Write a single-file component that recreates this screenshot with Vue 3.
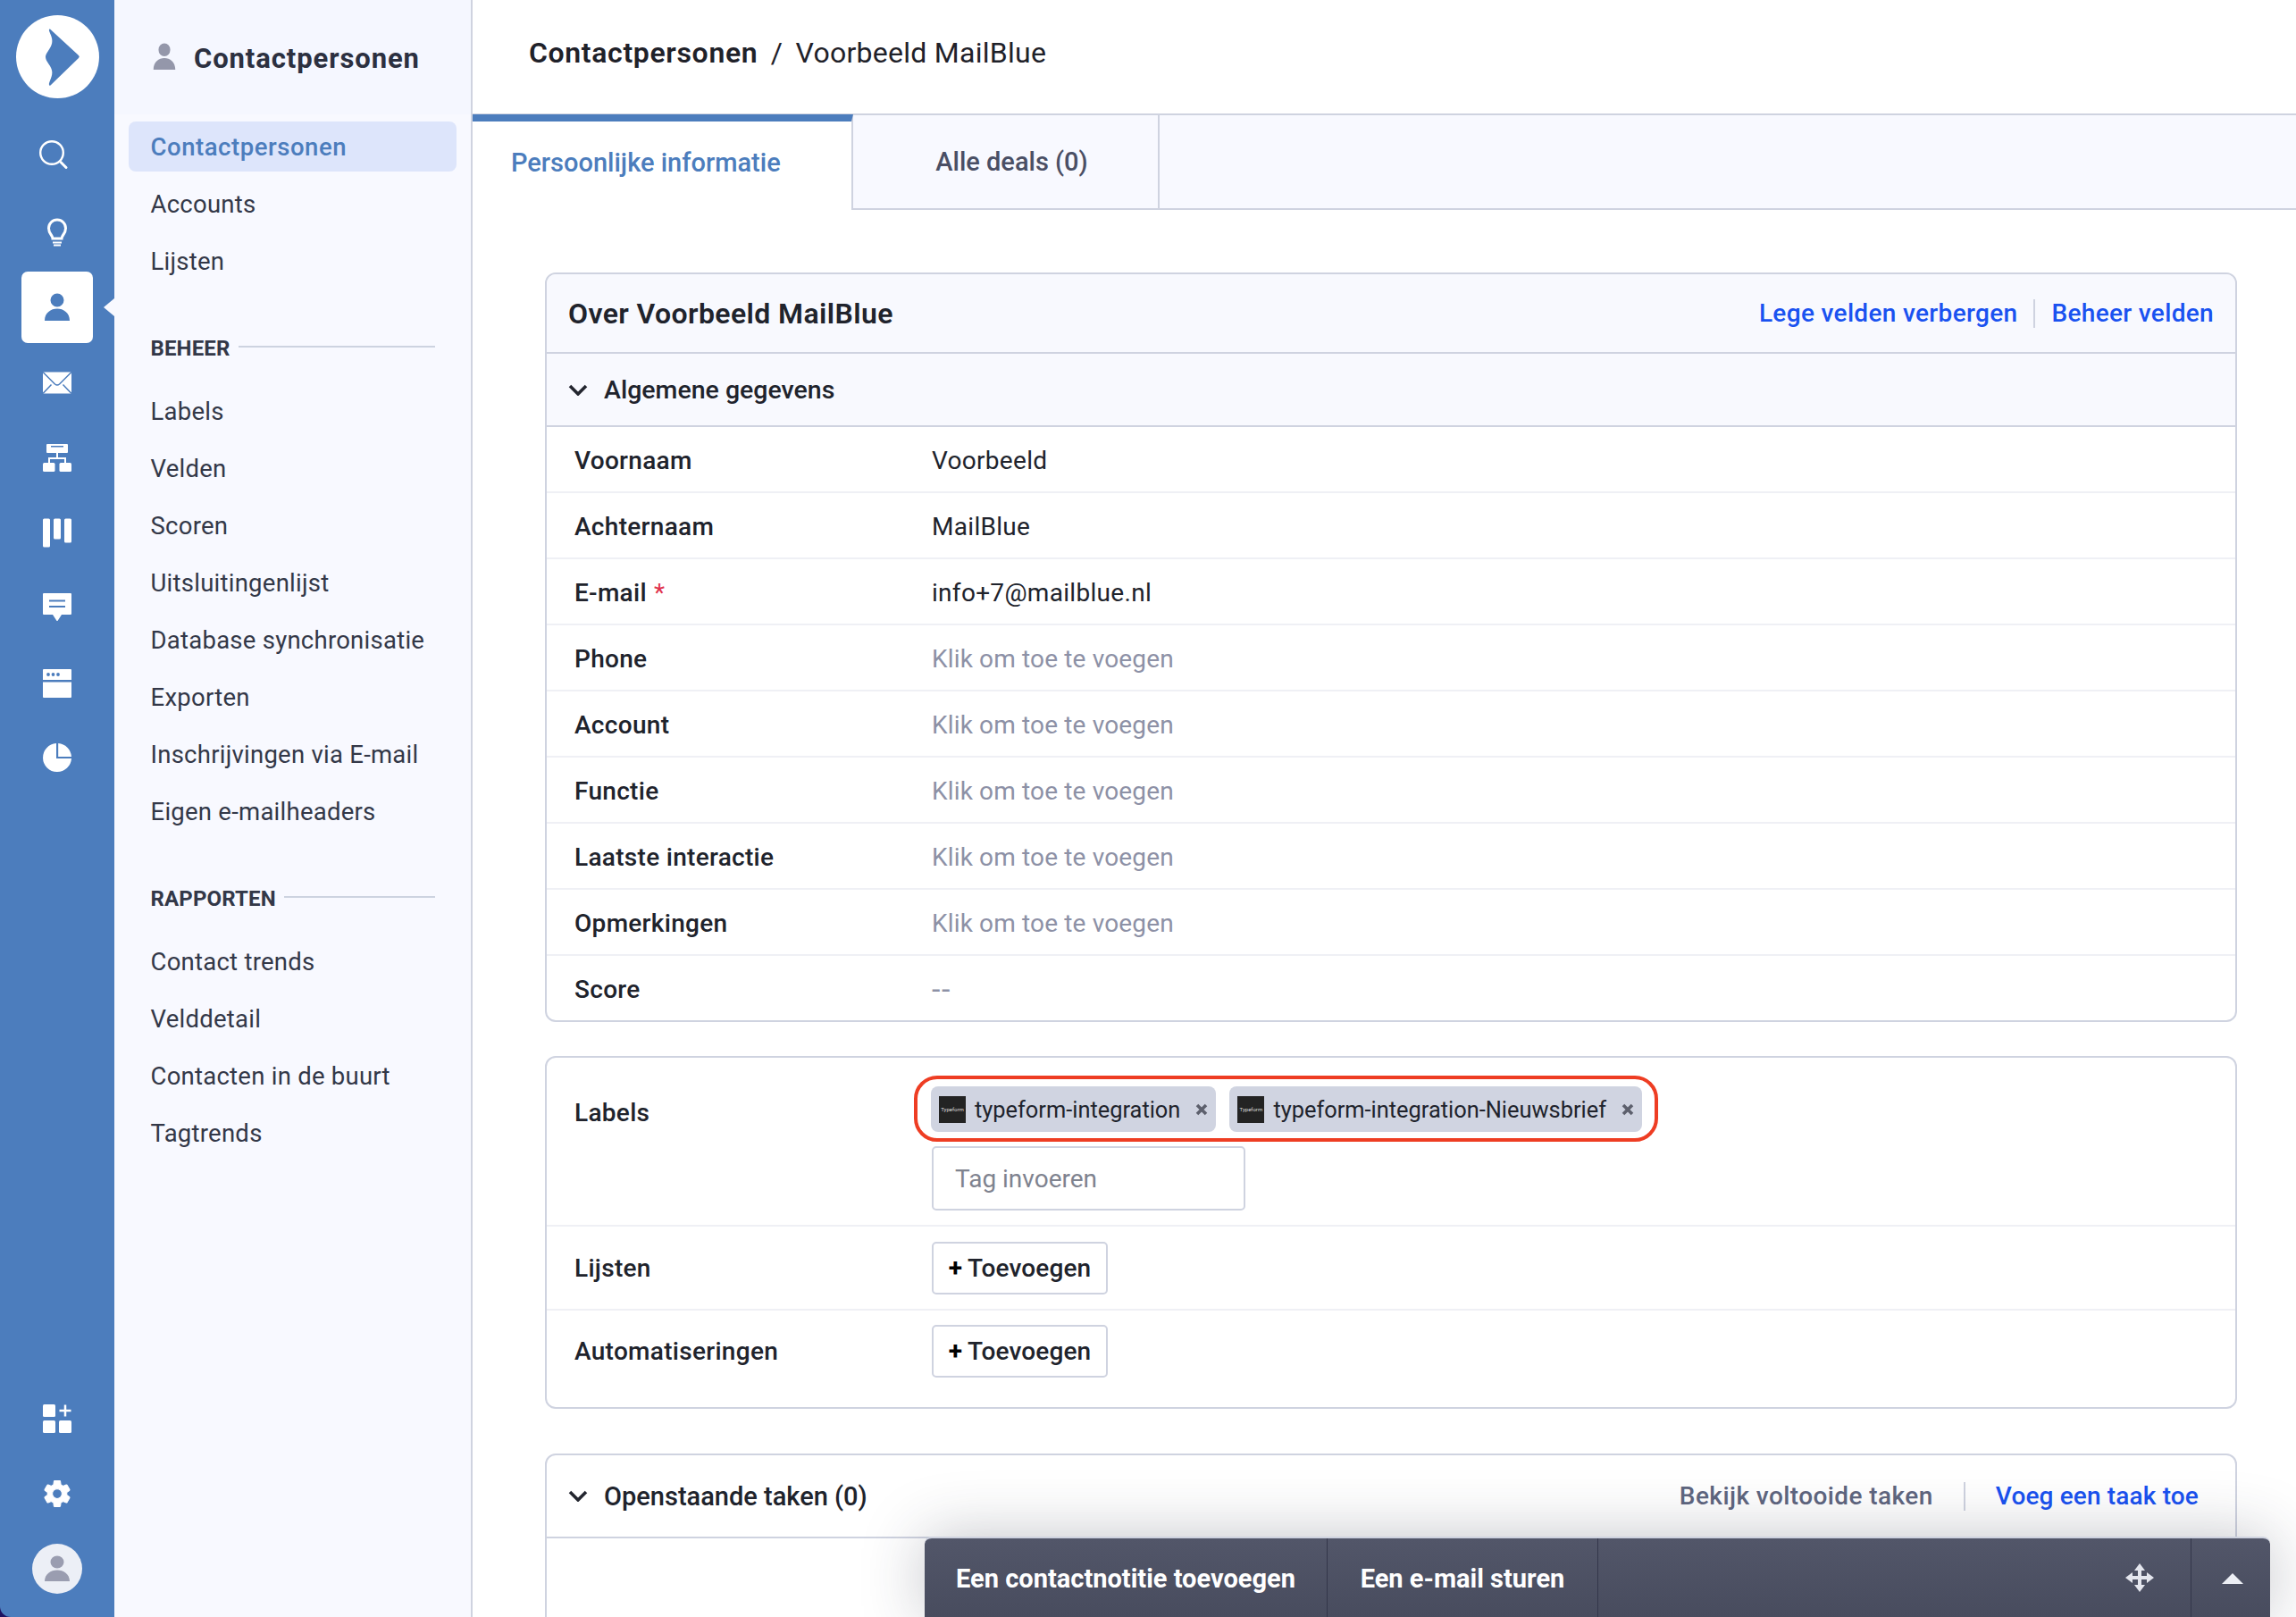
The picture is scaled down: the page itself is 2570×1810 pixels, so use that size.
<script setup>
const personPath = 'M16 .5a7.5 7.5 0 1 1 0 15 7.5 7.5 0 0 1 0-15zM2 31C2 22 9 17.5 16 17.5S30 22 30 31H2z'
const navTop = ['Contactpersonen', 'Accounts', 'Lijsten']
const beheer = ['Labels', 'Velden', 'Scoren', 'Uitsluitingenlijst', 'Database synchronisatie', 'Exporten', 'Inschrijvingen via E-mail', 'Eigen e-mailheaders']
const rapporten = ['Contact trends', 'Velddetail', 'Contacten in de buurt', 'Tagtrends']
const rows = [
  { label: 'Voornaam', value: 'Voorbeeld' },
  { label: 'Achternaam', value: 'MailBlue' },
  { label: 'E-mail', value: 'info+7@mailblue.nl', required: true },
  { label: 'Phone', placeholder: 'Klik om toe te voegen' },
  { label: 'Account', placeholder: 'Klik om toe te voegen' },
  { label: 'Functie', placeholder: 'Klik om toe te voegen' },
  { label: 'Laatste interactie', placeholder: 'Klik om toe te voegen' },
  { label: 'Opmerkingen', placeholder: 'Klik om toe te voegen' },
  { label: 'Score', placeholder: '--' }
]
const tags = ['typeform-integration', 'typeform-integration-Nieuwsbrief']
</script>

<template>
  <div class="app">
    <aside class="rail">
      <div class="logo">
        <svg width="93" height="93" viewBox="0 0 93 93"><circle cx="46.5" cy="46.5" r="46.5" fill="#fff" /><path d="M38 15.5 70 45q1.6 1.5 0 3L38.5 78.5q-2 1-1.6-2C38.500 71 42 66 39.500 60 37.500 55 33 51 33 46.800S37.500 39 39.500 33.500C42 27 38.500 22 37 17.500q-.5-2.500 1-2z" fill="#4c7dbd" /></svg>
      </div>
      <nav class="rail-nav">
        <div class="slot">
          <svg class="ico" viewBox="0 0 32 32" fill="none" stroke="#fff" stroke-width="2.4" stroke-linecap="round"><circle cx="10" cy="14" r="12.800" /><path d="M20 24.500l6 6" stroke-width="3" /></svg>
        </div>
        <div class="slot">
          <svg class="ico" viewBox="0 0 32 32" fill="none" stroke="#fff" stroke-width="3"><path d="M11 25c0-4-4.500-5-4.500-11.500a9.500 9.500 0 0 1 19 0C25.500 20 21 21 21 25z" /><path d="M11 29.500h10M12 32.500h8" stroke-width="2.200" /></svg>
        </div>
        <div class="slot slot-active">
          <div class="active-box">
            <svg class="ico" viewBox="0 0 32 32"><path :d="personPath" fill="#4c7dbd" /></svg>
          </div>
        </div>
        <div class="slot">
          <svg class="ico" viewBox="0 0 32 32"><rect y="5.500" width="32" height="24" fill="#fff" /><path d="M0 5.500l13.500 13.500q2.500 2 5 0L32 5.500M0 29.500l9.500-10M32 29.500l-9.500-10" fill="none" stroke="#4c7dbd" stroke-width="1.500" /></svg>
        </div>
        <div class="slot">
          <svg class="ico" viewBox="0 0 32 32" fill="#fff"><rect x="4" y="2" width="24" height="10" rx="1" /><rect x="9" y="4" width="14" height="1.500" fill="#4c7dbd" /><rect x="15" y="12" width="2" height="6" /><rect x="6" y="17" width="20" height="2" /><rect x="6" y="17" width="2" height="6" /><rect x="24" y="17" width="2" height="6" /><rect y="23" width="13.500" height="10" rx="1.500" /><rect x="18.500" y="23" width="13.500" height="10" rx="1.500" /></svg>
        </div>
        <div class="slot">
          <svg class="ico" viewBox="0 0 32 32" fill="#fff"><rect y=".5" width="8" height="32" rx="1.500" /><rect x="12" y=".5" width="8" height="23" rx="1.500" /><rect x="24" y=".5" width="8" height="27" rx="1.500" /></svg>
        </div>
        <div class="slot">
          <svg class="ico" viewBox="0 0 32 32" fill="#fff"><path d="M1 0h30a1 1 0 0 1 1 1v22a1 1 0 0 1-1 1H21l-4.200 6.500q-.8 1-1.600 0L11 24H1a1 1 0 0 1-1-1V1a1 1 0 0 1 1-1z" /><path d="M7 8.500h18M7 15h18" stroke="#4c7dbd" stroke-width="1.800" /></svg>
        </div>
        <div class="slot">
          <svg class="ico" viewBox="0 0 32 32" fill="#fff"><path d="M1 0h30a1 1 0 0 1 1 1v11H0V1a1 1 0 0 1 1-1z" /><path d="M0 14.500h32V31a1 1 0 0 1-1 1H1a1 1 0 0 1-1-1z" /><circle cx="6" cy="6" r="1.900" fill="#4c7dbd" /><circle cx="11.500" cy="6" r="1.900" fill="#4c7dbd" /><circle cx="17" cy="6" r="1.900" fill="#4c7dbd" /></svg>
        </div>
        <div class="slot">
          <svg class="ico" viewBox="0 0 32 32" fill="#fff"><path d="M15 -.9A16 16 0 1 0 32 16H15z" /><path d="M17.200 -.9A16 16 0 0 1 32 13.900H17.200z" /></svg>
        </div>
      </nav>
      <div class="rail-bottom">
        <div class="slot-b">
          <svg class="ico" viewBox="0 0 32 32" fill="#fff"><rect width="14" height="14" rx="1.500" /><rect y="18" width="14" height="14" rx="1.500" /><rect x="18" y="18" width="14" height="14" rx="1.500" /><path d="M18.500 7h13M25 .5v13" stroke="#fff" stroke-width="2.500" /></svg>
        </div>
        <div class="slot-b">
          <svg class="ico ico-gear" viewBox="0 0 24 24" fill="#fff" stroke="#fff" stroke-width=".7"><path d="M19.140 12.940c.04-.3.06-.61.06-.94 0-.32-.02-.64-.07-.94l2.030-1.580a.49.49 0 0 0 .12-.61l-1.920-3.320a.488.488 0 0 0-.59-.22l-2.390.96c-.5-.38-1.030-.7-1.620-.94l-.36-2.540a.484.484 0 0 0-.48-.41h-3.840c-.24 0-.43.17-.47.41l-.36 2.540c-.59.24-1.130.57-1.620.94l-2.390-.96c-.22-.08-.47 0-.59.22L2.740 8.870c-.12.21-.08.47.12.61l2.030 1.580c-.05.3-.09.63-.09.94s.02.64.07.94l-2.030 1.580a.49.49 0 0 0-.12.61l1.920 3.320c.12.22.37.29.59.22l2.390-.96c.5.38 1.030.7 1.620.94l.36 2.540c.05.24.24.41.48.41h3.840c.24 0 .44-.17.47-.41l.36-2.540c.59-.24 1.130-.56 1.620-.94l2.390.96c.22.08.47 0 .59-.22l1.920-3.320c.12-.22.07-.47-.12-.61l-2.010-1.580zM12 15.600c-1.980 0-3.600-1.620-3.600-3.600s1.620-3.600 3.600-3.600 3.600 1.620 3.600 3.600-1.620 3.600-3.600 3.600z" fill-rule="evenodd" /></svg>
        </div>
        <div class="slot-b">
          <div class="avatar">
            <svg width="32" height="30" viewBox="0 0 32 32" preserveAspectRatio="none"><path :d="personPath" fill="#9a9db0" /></svg>
          </div>
        </div>
      </div>
    </aside>

    <aside class="subnav">
      <div class="sub-head">
        <svg class="sub-ico" width="28" height="31" viewBox="0 0 32 32" preserveAspectRatio="none"><path :d="personPath" fill="#9497aa" /></svg>
        <span class="sub-title">Contactpersonen</span>
      </div>
      <div class="sub-body">
        <a v-for="(item, i) in navTop" :key="item" class="sub-item" :class="{ on: i === 0 }">{{ item }}</a>
        <div class="sub-group group-1"><span>BEHEER</span><i></i></div>
        <a v-for="item in beheer" :key="item" class="sub-item">{{ item }}</a>
        <div class="sub-group group-2"><span>RAPPORTEN</span><i></i></div>
        <a v-for="item in rapporten" :key="item" class="sub-item">{{ item }}</a>
      </div>
    </aside>

    <main class="main">
      <header class="crumb"><b>Contactpersonen</b><span class="sep">/</span><span class="crumb-cur">Voorbeeld MailBlue</span></header>
      <div class="tabs">
        <div class="tab tab-on">Persoonlijke informatie</div>
        <div class="tab tab-off">Alle deals (0)</div>
        <div class="tab-rest"></div>
      </div>
      <div class="content">
        <section class="card">
          <div class="card-head">
            <h2>Over Voorbeeld MailBlue</h2>
            <div class="links"><a>Lege velden verbergen</a><i class="vr"></i><a>Beheer velden</a></div>
          </div>
          <div class="sec-head">
            <svg class="chev" width="22" height="13" viewBox="0 0 22 13"><path d="M2 2l9 9 9-9" fill="none" stroke="#23262f" stroke-width="3.600" /></svg>
            <span>Algemene gegevens</span>
          </div>
          <div v-for="r in rows" :key="r.label" class="row">
            <div class="lbl">{{ r.label }}<em v-if="r.required">*</em></div>
            <div v-if="r.value" class="val">{{ r.value }}</div>
            <div v-else class="val ph" :class="{ dash: r.placeholder === '--' }">{{ r.placeholder }}</div>
          </div>
        </section>

        <section class="card card-2">
          <div class="row2 row-labels">
            <div class="lbl lbl-top">Labels</div>
            <div class="tagcol">
              <div class="chips">
                <div class="mark"></div>
                <div v-for="t in tags" :key="t" class="chip">
                  <span class="thumb">Typeform</span>
                  <span class="chip-t">{{ t }}</span>
                  <svg class="chip-x" width="14" height="14" viewBox="0 0 14 14"><path d="M2 2l10 10M12 2L2 12" stroke="#5d606d" stroke-width="3.600" /></svg>
                </div>
              </div>
              <div class="taginput">Tag invoeren</div>
            </div>
          </div>
          <div class="row2">
            <div class="lbl">Lijsten</div>
            <div class="btn"><b>+</b> Toevoegen</div>
          </div>
          <div class="row2 row-last">
            <div class="lbl">Automatiseringen</div>
            <div class="btn"><b>+</b> Toevoegen</div>
          </div>
        </section>

        <section class="card card-3">
          <div class="task-head">
            <svg class="chev" width="22" height="13" viewBox="0 0 22 13"><path d="M2 2l9 9 9-9" fill="none" stroke="#23262f" stroke-width="3.600" /></svg>
            <span class="task-t">Openstaande taken (0)</span>
            <a class="muted">Bekijk voltooide taken</a>
            <i class="vr vr-2"></i>
            <a class="blue">Voeg een taak toe</a>
          </div>
          <div class="task-body"></div>
        </section>
      </div>
    </main>

    <div class="dock">
      <div class="dock-cell cell-1">Een contactnotitie toevoegen</div>
      <div class="dock-cell cell-2">Een e-mail sturen</div>
      <div class="dock-fill">
        <svg width="32" height="32" viewBox="0 0 32 32" fill="#e4e6ee"><path d="M16 0l6 8h-4v6h6v-4l8 6-8 6v-4h-6v6h4l-6 8-6-8h4v-6H8v4l-8-6 8-6v4h6V8h-4z" /></svg>
      </div>
      <div class="dock-cell cell-up"><svg width="24" height="12" viewBox="0 0 24 12"><path d="M12 0l12 12H0z" fill="#eceef4" /></svg></div>
    </div>
  </div>
</template>

<style scoped>
.app {
  --ff: Roboto, "Noto Sans", sans-serif;
  position: relative;
  display: flex;
  width: 2570px;
  height: 1810px;
  overflow: hidden;
  background: #1e1160;
  font-family: var(--ff);
  font-size: 27px;
  color: #20232c;
}
.rail {
  display: flex;
  flex-direction: column;
  flex: 0 0 128px;
  background: #4c7dbd;
  border-bottom-left-radius: 12px;
}
.logo { display: flex; justify-content: center; padding-top: 17px; height: 93px; }
.rail-nav { display: flex; flex-direction: column; margin-top: 21px; }
.slot, .slot-b { display: flex; align-items: center; justify-content: center; height: 84.5px; }
.slot-active { position: relative; margin-top: 2px; margin-bottom: -2px; }
.slot-active::after {
  content: "";
  position: absolute;
  right: 0;
  top: 32px;
  border-style: solid;
  border-width: 10.5px 12px 10.5px 0;
  border-color: transparent #f8f9ff transparent transparent;
}
.active-box {
  display: flex;
  align-items: center;
  justify-content: center;
  width: 80px;
  height: 80px;
  background: #fff;
  border-radius: 7px;
}
.ico { width: 32px; height: 32px; overflow: visible; display: block; }
.ico-gear { width: 36px; height: 36px; }
.rail-bottom { margin-top: auto; padding-bottom: 12px; }
.slot-b { height: 84px; }
.avatar {
  display: flex;
  align-items: center;
  justify-content: center;
  width: 56px;
  height: 56px;
  border-radius: 50%;
  background: #eceff6;
}
.subnav {
  flex: 0 0 401px;
  box-sizing: border-box;
  background: #f8f9ff;
  border-right: 2px solid #cfd3e0;
}
.sub-head { display: flex; align-items: center; height: 128px; padding: 0 0 0 42px; box-sizing: border-box; background: #f5f7ff; }
.sub-ico { margin-right: 19px; margin-top: -1px; }
.sub-title { font-size: 31px; font-weight: 700; color: #2c3040; letter-spacing: .9px; margin-top: 2px; }
.sub-body { display: flex; flex-direction: column; padding: 8px 16px 0; }
.sub-item {
  display: flex;
  align-items: center;
  height: 64px;
  padding-left: 24.500px;
  color: #333848;
  font-size: 27.500px;
  letter-spacing: .25px;
}
.sub-item.on { height: 56px; margin-bottom: 4px; margin-top: 0; background: #dde5fb; color: #4c7dbd; border-radius: 8px; font-weight: 500; letter-spacing: .55px; }
.sub-group { display: flex; align-items: center; padding: 0 24px 0 24.500px; height: 40px; font-size: 24px; font-weight: 700; color: #333848; letter-spacing: .15px; }
.sub-group i { flex: 1; height: 2px; background: #cdd3e0; margin-left: 9px; margin-top: -4px; }
.group-1 { margin-top: 46px; margin-bottom: 18px; }
.group-2 { margin-top: 46px; margin-bottom: 18px; }
.main { flex: 1; min-width: 0; background: #fff; display: flex; flex-direction: column; }
.crumb {
  flex: none;
  display: flex;
  align-items: center;
  height: 127px;
  box-sizing: border-box;
  padding: 0 0 9px 63px;
  font-size: 32px;
  color: #1f2129;
}
.crumb b { font-weight: 600; letter-spacing: .65px; }
.crumb-cur { letter-spacing: .27px; }
.sep { margin: 0 14.500px; }
.tabs { flex: none; display: flex; height: 108px; border-top: 2px solid #cfd3e0; box-sizing: border-box; }
.tab { display: flex; align-items: center; font-size: 29px; font-weight: 500; box-sizing: border-box; }
.tab-on {
  width: 426px;
  padding: 0 0 8px 43px;
  margin-top: -1px;
  height: 107px;
  border-top: 8px solid #4c7dbd;
  border-right: 2px solid #cfd3e0;
  color: #4c7dbd;
  background: #fff;
}
.tab-off {
  width: 343px;
  justify-content: center;
  padding-left: 14px;
  background: #f8f9ff;
  border-right: 2px solid #cfd3e0;
  border-bottom: 2px solid #cfd3e0;
  color: #4a4f65;
}
.tab-rest { flex: 1; background: #f8f9ff; border-bottom: 2px solid #cfd3e0; }
.content { flex: none; padding: 70px 66px 0 81px; }
.card { border: 2px solid #cfd3e0; border-radius: 12px; overflow: hidden; box-sizing: border-box; background: #fff; }
.card-head {
  display: flex;
  align-items: center;
  justify-content: space-between;
  height: 87px;
  padding: 0 24px 0 24px;
  background: #f8f9fe;
  border-bottom: 2px solid #cfd3e0;
  box-sizing: content-box;
}
.card-head h2 { margin: 0; font-size: 32px; font-weight: 600; color: #20232c; letter-spacing: .4px; }
.links { display: flex; align-items: center; font-weight: 500; font-size: 28px; color: #1a52f0; letter-spacing: .33px; }
.vr { display: block; width: 2px; height: 32px; background: #cfd3e0; margin: 0 18px; }
.sec-head {
  display: flex;
  align-items: center;
  height: 82px;
  box-sizing: border-box;
  padding-left: 24px;
  background: #f8f9fe;
  border-bottom: 2px solid #cfd3e0;
  font-size: 28.500px;
  font-weight: 500;
}
.chev { margin-right: 18px; flex: none; }
.row {
  display: flex;
  align-items: center;
  height: 74px;
  box-sizing: border-box;
  padding: 2px 0 0 31px;
  border-bottom: 2px solid #eff0f5;
  font-size: 28px;
}
.row:last-child { border-bottom: 0; height: 72px; }
.lbl { flex: 0 0 400px; font-weight: 500; color: #20232c; font-size: 28px; letter-spacing: .3px; }
.lbl em { color: #e0334d; font-style: normal; margin-left: 8px; font-weight: 400; }
.val { color: #20232c; letter-spacing: .3px; }
.ph { color: #8d91a6; letter-spacing: .15px; }
.dash { letter-spacing: 1.500px; font-size: 34px; line-height: 28px; }
.card-2 { margin-top: 38px; }
.row2 {
  display: flex;
  align-items: center;
  height: 94px;
  box-sizing: border-box;
  padding-left: 31px;
  border-bottom: 2px solid #eff0f5;
}
.row-labels { height: 189px; align-items: flex-start; }
.row-last { border-bottom: 0; height: 108px; padding-bottom: 17px; }
.lbl-top { padding-top: 45px; }
.tagcol { display: flex; flex-direction: column; padding-top: 32px; margin-left: -1px; }
.chips { position: relative; display: flex; gap: 15px; height: 51px; }
.mark {
  position: absolute;
  left: -19px;
  top: -12px;
  width: 833px;
  height: 74px;
  box-sizing: border-box;
  border: 4px solid #ee3d23;
  border-radius: 26px;
}
.chip {
  display: flex;
  align-items: center;
  height: 51px;
  padding: 0 9px;
  background: #d0d4e1;
  border-radius: 8px;
  font-size: 25.400px;
  color: #20232c;
}
.thumb {
  display: flex;
  align-items: center;
  justify-content: center;
  width: 30px;
  height: 30px;
  background: #232323;
  color: #ddd;
  font-size: 6px;
  overflow: hidden;
  margin-right: 10px;
}
.chip-t { flex: 1; }
.chip-x { margin-left: 17px; }
.taginput {
  display: flex;
  align-items: center;
  width: 351px;
  height: 72px;
  margin-top: 16px;
  margin-left: 1px;
  box-sizing: border-box;
  padding-left: 24px;
  border: 2px solid #cfd3e0;
  border-radius: 5px;
  color: #7f838f;
  font-size: 28px;
}
.btn {
  display: flex;
  align-items: center;
  justify-content: center;
  gap: 6px;
  width: 197px;
  height: 59px;
  box-sizing: border-box;
  border: 2px solid #cfd3e0;
  border-radius: 5px;
  font-size: 28px;
  font-weight: 500;
  letter-spacing: .15px;
  color: #20232c;
}
.btn b { font-weight: 700; color: #000; }
.card-3 { margin-top: 50px; height: 400px; }
.task-head { display: flex; align-items: center; height: 91px; padding: 0 41px 0 24px; border-bottom: 2px solid #cfd3e0; font-size: 28px; }
.task-t { flex: 1; font-weight: 500; font-size: 29px; }
.muted { color: #5f667f; font-weight: 500; letter-spacing: .42px; }
.blue { color: #1a52f0; font-weight: 500; letter-spacing: .15px; }
.vr-2 { margin: 0 34px; }
.dock {
  position: absolute;
  right: 29px;
  bottom: 0;
  display: flex;
  width: 1506px;
  height: 90px;
  box-sizing: border-box;
  border-top: 2px solid #cfd3e0;
  border-radius: 8px 8px 0 0;
  background: linear-gradient(#525669, #484c5e);
  box-shadow: 0 0 70px rgba(40, 44, 60, .28);
  color: #fff;
  font-size: 29px;
  font-weight: 700;
}
.dock-cell { display: flex; align-items: center; justify-content: center; box-sizing: border-box; padding-top: 2px; border-right: 1px solid #33364a; }
.cell-1 { width: 451px; }
.cell-2 { width: 303px; }
.dock-fill { flex: 1; display: flex; align-items: center; justify-content: flex-end; padding-right: 41px; border-right: 1px solid #33364a; }
.cell-up { width: 88px; border-right: 0; padding-left: 4px; }
</style>
